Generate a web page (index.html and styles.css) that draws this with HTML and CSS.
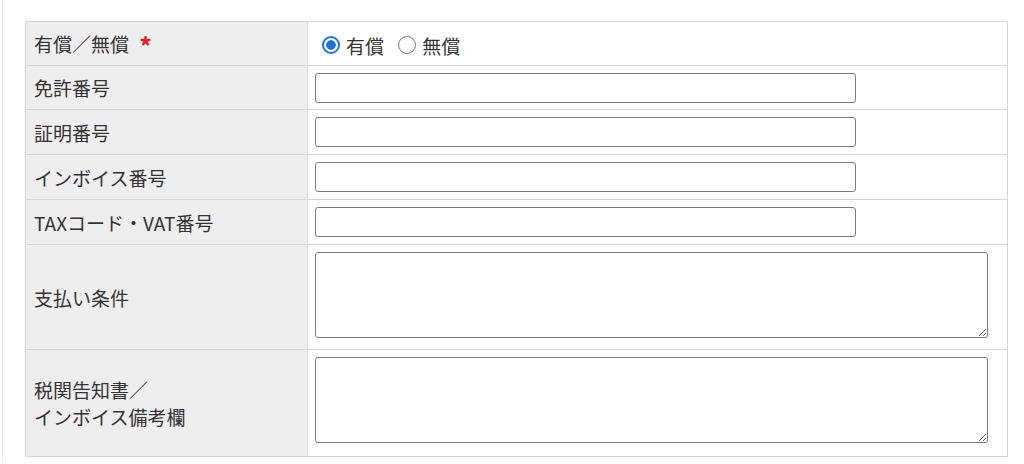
FILE: index.html
```html
<!DOCTYPE html>
<html lang="ja">
<head>
  <meta charset="UTF-8">
  <title>支払い情報</title>
  <link rel="stylesheet" href="styles.css">
</head>
<body>
  <div class="wrapper">
    <table class="form-table">
      <tr class="row-s">
        <th>有償／無償 <span class="req">*</span></th>
        <td class="radios">
          <label class="opt"><input type="radio" name="paid" checked><span>有償</span></label>
          <label class="opt"><input type="radio" name="paid"><span>無償</span></label>
        </td>
      </tr>
      <tr class="row-s">
        <th>免許番号</th>
        <td><input type="text" class="text-input"></td>
      </tr>
      <tr class="row-m">
        <th>証明番号</th>
        <td><input type="text" class="text-input"></td>
      </tr>
      <tr class="row-m">
        <th>インボイス番号</th>
        <td><input type="text" class="text-input"></td>
      </tr>
      <tr class="row-m">
        <th>TAXコード・VAT番号</th>
        <td><input type="text" class="text-input"></td>
      </tr>
      <tr class="row-area">
        <th>支払い条件</th>
        <td class="area-cell"><textarea class="area"></textarea></td>
      </tr>
      <tr class="row-area last">
        <th>税関告知書／<br>インボイス備考欄</th>
        <td class="area-cell"><textarea class="area"></textarea></td>
      </tr>
    </table>
  </div>
</body>
</html>
```

FILE: styles.css
```css
body { margin: 0; background: #fff; color: #333; font-family: "Noto Sans CJK JP", "Noto Sans", sans-serif; }
.wrapper { margin-left: 2px; border-left: 1px solid #e2e2e2; height: 463px; padding: 21px 0 0 22px; box-sizing: border-box; }

.form-table { width: 983px; border-collapse: collapse; font-size: 19px; line-height: 27px; }
.form-table th, .form-table td { border: 1px solid #d6d6d6; }
.form-table th {
  width: 273px;
  background: #eeeeee;
  font-weight: normal;
  text-align: left;
  padding: 0 0 0 8px;
  vertical-align: middle;
}
.form-table td { padding: 0 7px; background: #fff; vertical-align: middle; }

.row-s { height: 44px; }
.row-m { height: 45px; }
.row-area { height: 105px; }
.row-area.last { height: 107px; }
.form-table .area-cell { padding: 7px 19px 0 7px; vertical-align: top; }

.req { color: #e0201b; font-weight: bold; font-size: 25px; margin-left: 6px; vertical-align: -4px; line-height: 1; }

.opt { display: inline-flex; align-items: center; margin-right: 10px; vertical-align: middle; }
.opt:first-child { margin-left: 7px; }
.opt input {
  appearance: none;
  width: 18px; height: 18px; margin: 0 6px 0 0;
  border: 1px solid #777; border-radius: 50%; background: #fff;
  box-sizing: border-box;
}
.opt input:checked { border: 2.5px solid #1a73e8; background: radial-gradient(circle, #1a73e8 0 4.5px, #fff 5px); }

.text-input {
  display: block;
  width: 541px; height: 30px;
  box-sizing: border-box;
  border: 1px solid #7a7a7a; border-radius: 3px;
  padding: 2px 6px; font-size: 16px;
}

.area {
  display: block;
  width: 673px; height: 86px;
  box-sizing: border-box;
  border: 1px solid #7a7a7a; border-radius: 3px;
  font-family: inherit; font-size: 16px;
}
```
